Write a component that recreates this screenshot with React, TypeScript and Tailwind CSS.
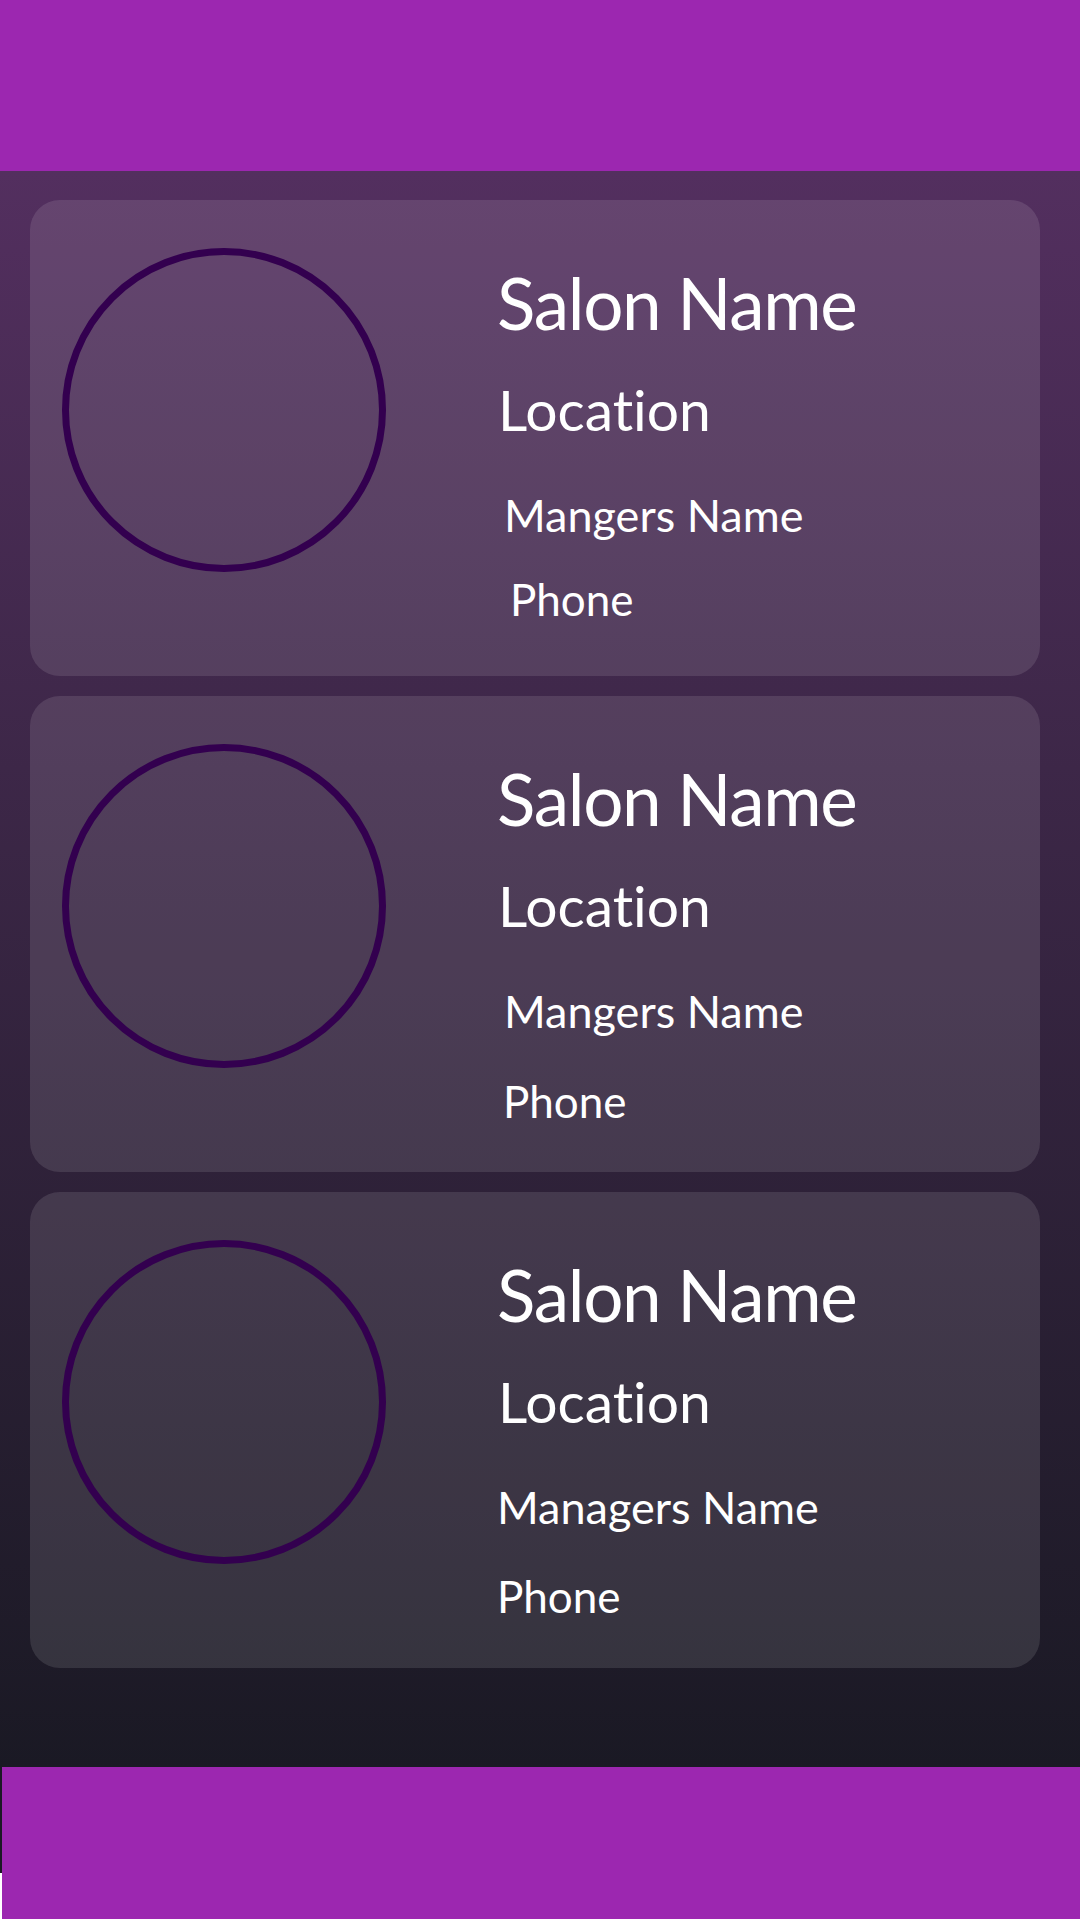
import React from "react";

type Card = {
  manager: string;
  mgrIndent: string;
  phoneIndent: string;
  phoneGap: string;
};

const cards: Card[] = [
  { manager: "Mangers Name", mgrIndent: "pl-[7px]", phoneIndent: "pl-[13px]", phoneGap: "mt-[39px]" },
  { manager: "Mangers Name", mgrIndent: "pl-[7px]", phoneIndent: "pl-[6px]", phoneGap: "mt-[45px]" },
  { manager: "Managers Name", mgrIndent: "pl-0", phoneIndent: "pl-0", phoneGap: "mt-[44px]" },
];

function SalonCard({ c }: { c: Card }) {
  return (
    <div className="flex h-[476px] w-[1010px] rounded-[30px] bg-white/[0.11]">
      <div className="pl-[32px] pt-[48px]">
        <div className="h-[324px] w-[324px] rounded-full border-[7px] border-[#33004f]" />
      </div>
      <div
        className="flex flex-col pl-[111px] pt-[67px] text-white [font-variant-ligatures:none]"
        style={{ fontFamily: "Lato, 'Open Sans', sans-serif" }}
      >
        <div className="text-[71px] leading-none tracking-[-1.3px]">Salon Name</div>
        <div className="mt-[43px] pl-[1px] text-[57px] leading-none">Location</div>
        <div className={`mt-[55px] text-[45px] leading-none ${c.mgrIndent}`}>{c.manager}</div>
        <div className={`${c.phoneGap} text-[44px] leading-none ${c.phoneIndent}`}>Phone</div>
      </div>
    </div>
  );
}

export default function App() {
  return (
    <div className="flex h-[1920px] w-[1080px] flex-col overflow-hidden bg-white">
      <div className="h-[171px] w-full bg-[#9c27b0]" />
      <div className="flex h-[1596px] flex-col gap-[20px] bg-gradient-to-b from-[#532f5f] to-[#1a1924] pl-[30px] pt-[29px]">
        {cards.map((c, i) => (
          <SalonCard key={i} c={c} />
        ))}
      </div>
      <div className="flex h-[153px] w-full">
        <div className="flex w-[2px] flex-col">
          <div className="h-[106px] bg-[#1a1924]" />
          <div className="flex-1 bg-white" />
        </div>
        <div className="flex flex-1 flex-col">
          <div className="h-[152px] bg-[#9c27b0]" />
          <div className="flex-1 bg-white" />
        </div>
      </div>
    </div>
  );
}
